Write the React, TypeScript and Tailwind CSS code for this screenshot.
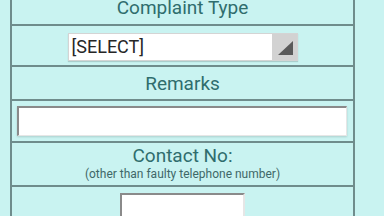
import React from 'react'

const font = { fontFamily: 'Roboto, "Noto Sans", sans-serif' }

export default function App() {
  return (
    <div className="w-[384px] h-[216px] overflow-hidden bg-[#c9f3f1]" style={font}>
      <div className="ml-[10px] w-[345px] -mt-[14px] border-x-2 border-[#6f8c8c] bg-[#c9f3f1]">
        {/* Complaint type */}
        <div className="h-[38px] flex items-center justify-center pt-[5px] text-[19px] text-[#2f6d6d] leading-none">
          Complaint Type
        </div>
        <div className="h-[41px] border-t-2 border-[#6f8c8c] flex items-center justify-center">
          <div className="mt-[2px] w-[230px] h-[28px] flex bg-white border border-[#d4d4d4] shadow-[0_1px_1px_rgba(0,0,0,0.15)]">
            <div className="flex-1 flex items-center pl-[3px] text-[18px] text-[#262626] leading-none">[SELECT]</div>
            <div className="w-[25px] bg-[#d2d2d2] relative">
              <svg className="absolute right-[4px] bottom-[5px]" width="15" height="14" viewBox="0 0 15 14">
                <polygon points="15,0 15,14 0,14" fill="#5a5a5a" />
              </svg>
            </div>
          </div>
        </div>

        {/* Remarks */}
        <div className="h-[34px] border-t-2 border-[#6f8c8c] flex items-center justify-center text-[19px] text-[#2f6d6d] leading-none">
          Remarks
        </div>
        <div className="h-[42px] border-t-2 border-[#6f8c8c] flex items-center px-[5px]">
          <div className="w-[330px] h-[30px] bg-white border-t-2 border-l-2 border-[#8a8a8a] border-r border-b border-r-[#e6e6e6] border-b-[#e6e6e6] shadow-[0_1px_2px_rgba(0,0,0,0.15)]" />
        </div>

        {/* Contact */}
        <div className="h-[44px] border-t-2 border-[#6f8c8c] flex flex-col items-center justify-center text-[#2f6d6d]">
          <div className="text-[19px] leading-none mt-[-2px]">Contact No:</div>
          <div className="text-[12px] leading-none mt-[3px] text-[#3f6868]">(other than faulty telephone number)</div>
        </div>
        <div className="h-[40px] border-t-2 border-[#6f8c8c] flex justify-center">
          <div className="mt-[6px] ml-[-1px] w-[125px] h-[30px] bg-white border-t-2 border-l-2 border-r-2 border-[#8a8a8a] border-r-[#e6e6e6]" />
        </div>
      </div>
    </div>
  )
}
